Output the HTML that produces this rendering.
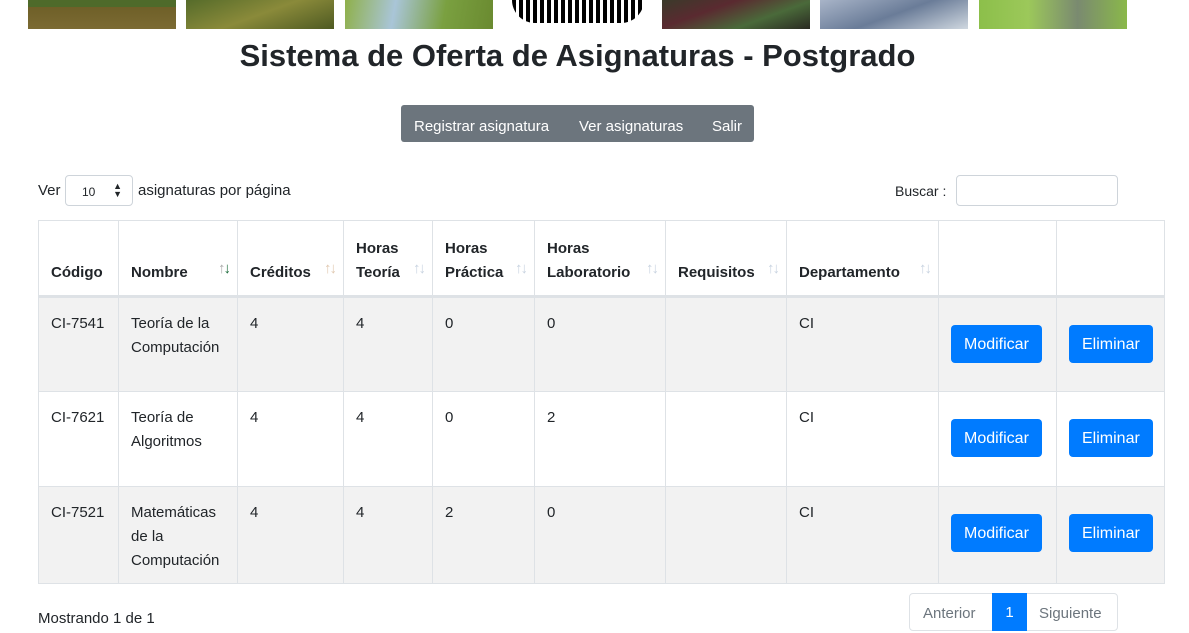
<!DOCTYPE html>
<html><head><meta charset="utf-8"><style>
*{box-sizing:border-box}
body{margin:0;width:1189px;height:630px;overflow:hidden;background:#fff;font-family:"Liberation Sans",sans-serif;color:#212529;font-size:15px;position:relative}
.a{position:absolute}
.img{position:absolute;top:0;height:29px;width:148px}
h1{position:absolute;top:38px;left:0;width:1155px;text-align:center;margin:0;font-size:31px;font-weight:bold;color:#212529}
.nav{left:401px;top:105px;width:353px;height:37px;background:#6c757d;border-radius:3px;color:#fff;font-size:15px}
.nav span{position:absolute;top:13px}
table{position:absolute;left:38px;top:220px;border-collapse:collapse;width:1126px;table-layout:fixed}
td,th{border:1px solid #dee2e6;vertical-align:top;padding:14px 12px 10px;text-align:left;line-height:24px}
th{vertical-align:bottom;font-weight:bold;height:76px;border-bottom:3px solid #dee2e6;position:relative;padding:12px 18px 10px 12px}
th i{position:absolute;right:8px;bottom:14px;font-style:normal;color:#c8d3e0;font-size:15px;letter-spacing:-2px}
tr.o td{background:#f2f2f2}
.btn{display:inline-block;background:#007bff;color:#fff;border-radius:4px;padding:0 13px;height:38px;line-height:40px;margin-top:13px;font-size:16px}
</style></head><body>
<div class="img" style="left:28px;background:linear-gradient(#4e6a2a 0 25%,#6f6028 25%,#7b6a33)"></div>
<div class="img" style="left:186px;background:linear-gradient(160deg,#556b2a,#8a8a3a,#4e5a22)"></div>
<div class="img" style="left:345px;background:linear-gradient(100deg,#8fb04a,#a9c5d8,#7aa040,#6a8a30)"></div>
<div class="a" style="left:512px;top:0;width:132px;height:23px;border-radius:0 0 66px 66px;background:repeating-linear-gradient(90deg,#000 0 4px,#fff 4px 7px)"></div>
<div class="img" style="left:662px;background:linear-gradient(160deg,#3a3a2a,#5a2a30,#4a6a3a,#2a2a22)"></div>
<div class="img" style="left:820px;background:linear-gradient(160deg,#a8b4c8,#6a7c98,#d0d8e0)"></div>
<div class="img" style="left:979px;background:linear-gradient(90deg,#8cbf4a,#9cc85a,#7a8a70,#8ab84a)"></div>
<h1>Sistema de Oferta de Asignaturas - Postgrado</h1>
<div class="a nav"><span style="left:13px">Registrar asignatura</span><span style="left:178px">Ver asignaturas</span><span style="left:311px">Salir</span></div>
<div class="a" style="left:38px;top:182px">Ver</div>
<div class="a" style="left:65px;top:175px;width:68px;height:31px;border:1px solid #ced4da;border-radius:4px;font-size:12px;padding:9px 0 0 16px">10<span style="position:absolute;right:10px;top:6px;font-size:9px;line-height:8px">▲<br>▼</span></div>
<div class="a" style="left:138px;top:182px">asignaturas por página</div>
<div class="a" style="left:895px;top:183px;font-size:14px">Buscar :</div>
<div class="a" style="left:956px;top:175px;width:162px;height:31px;border:1px solid #ced4da;border-radius:4px"></div>
<table>
<colgroup><col style="width:80px"><col style="width:119px"><col style="width:106px"><col style="width:89px"><col style="width:102px"><col style="width:131px"><col style="width:121px"><col style="width:152px"><col style="width:118px"><col style="width:108px"></colgroup>
<tr><th>Código</th><th>Nombre<i style="color:#aaa">↑<span style="color:#1a6a3a">↓</span></i></th><th>Créditos<i style="color:#e0c8b0">↑↓</i></th><th>Horas Teoría<i>↑↓</i></th><th>Horas Práctica<i>↑↓</i></th><th>Horas Laboratorio<i>↑↓</i></th><th>Requisitos<i>↑↓</i></th><th>Departamento<i>↑↓</i></th><th></th><th></th></tr>
<tr class="o" style="height:95px"><td>CI-7541</td><td>Teoría de la Computación</td><td>4</td><td>4</td><td>0</td><td>0</td><td></td><td>CI</td><td><span class="btn">Modificar</span></td><td><span class="btn">Eliminar</span></td></tr>
<tr style="height:95px"><td>CI-7621</td><td>Teoría de Algoritmos</td><td>4</td><td>4</td><td>0</td><td>2</td><td></td><td>CI</td><td><span class="btn">Modificar</span></td><td><span class="btn">Eliminar</span></td></tr>
<tr class="o" style="height:96px"><td>CI-7521</td><td>Matemáticas de la Computación</td><td>4</td><td>4</td><td>2</td><td>0</td><td></td><td>CI</td><td><span class="btn">Modificar</span></td><td><span class="btn">Eliminar</span></td></tr>
</table>
<div class="a" style="left:38px;top:610px">Mostrando 1 de 1</div>
<div class="a" style="left:909px;top:593px;width:209px;height:38px;border:1px solid #dee2e6;border-radius:4px;color:#6c757d">
<span class="a" style="left:13px;top:11px">Anterior</span>
<span class="a" style="left:82px;top:-1px;width:35px;height:38px;background:#007bff;color:#fff;text-align:center;line-height:40px">1</span>
<span class="a" style="left:129px;top:11px">Siguiente</span></div>
</body></html>
